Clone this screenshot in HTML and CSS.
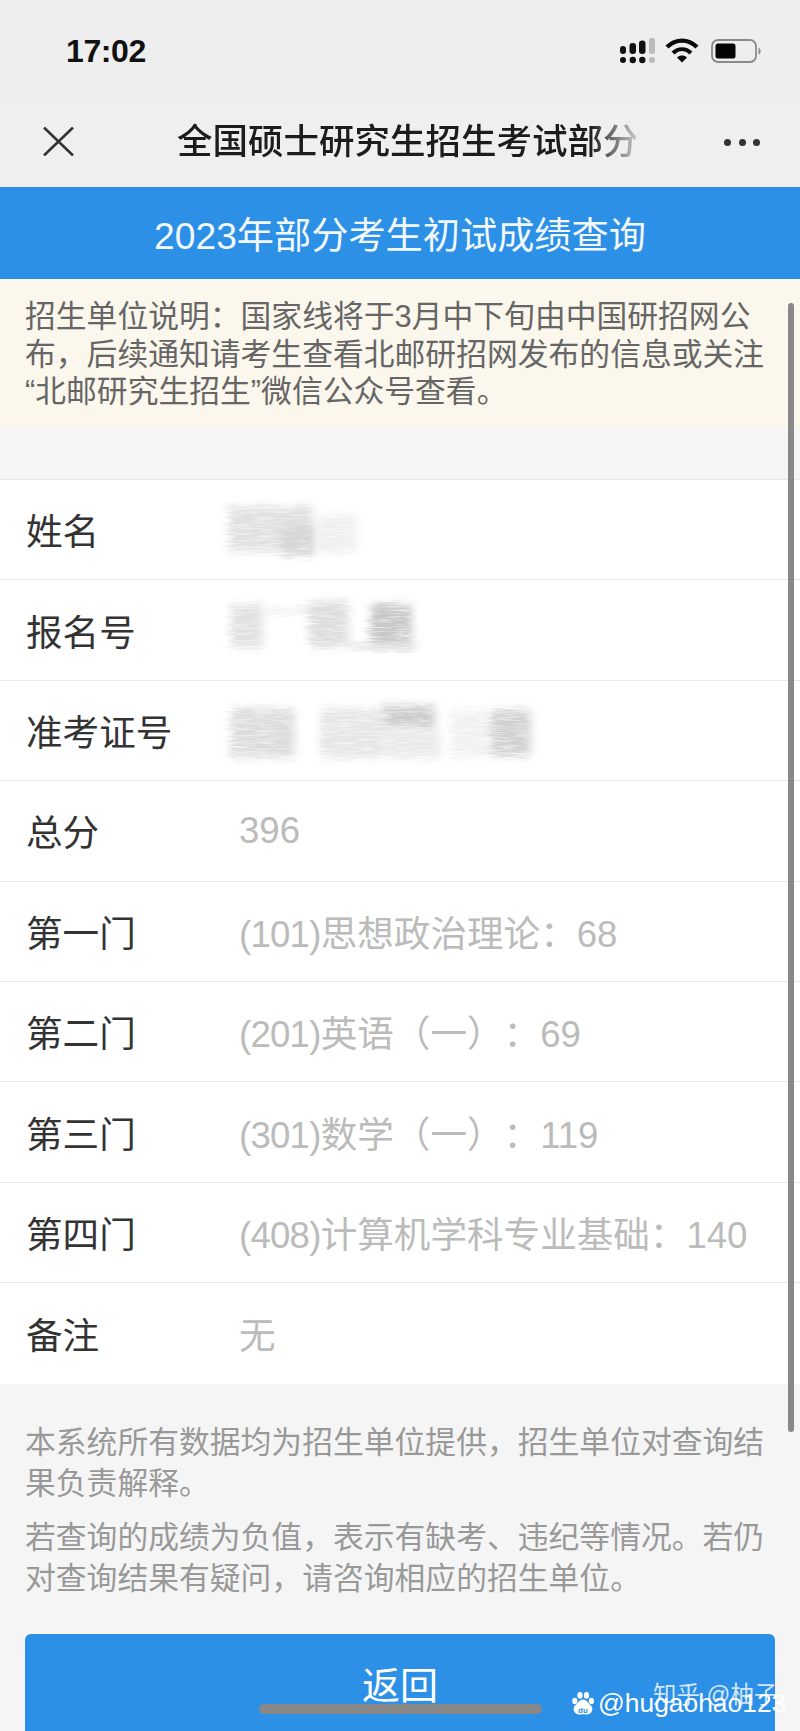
FILE: index.html
```html
<!DOCTYPE html>
<html lang="zh">
<head>
    <meta charset="UTF-8">
    <meta name="viewport" content="width=device-width, initial-scale=1.0">
    <title>2023年部分考生初试成绩查询</title>
    <link rel="stylesheet" href="styles.css">
</head>
<body>
    <div class="phone">
        <div class="status-bar">
            <span class="clock">17:02</span>
            <div class="status-icons">
                <svg class="signal" width="36" height="26" viewBox="0 0 36 26">
                    <rect x="0" y="8" width="6" height="8" rx="3" fill="#111"/>
                    <rect x="9.5" y="5" width="6.5" height="11" rx="3" fill="#111"/>
                    <rect x="19" y="2.5" width="6.5" height="13.5" rx="3" fill="#111"/>
                    <rect x="29" y="0" width="6" height="16" rx="2" fill="#bbb"/>
                    <circle cx="3" cy="22" r="3" fill="#111"/>
                    <circle cx="12.8" cy="22" r="3.2" fill="#111"/>
                    <circle cx="22.3" cy="22" r="3.2" fill="#111"/>
                    <circle cx="32" cy="22" r="3" fill="#bbb"/>
                </svg>
                <svg class="wifi" width="34" height="25" viewBox="0 0 34 25">
                    <path d="M2 9 C11 0.5 23 0.5 32 9" fill="none" stroke="#0a0a0a" stroke-width="4.4"/>
                    <path d="M8 15 C13.5 10 20.5 10 26 15" fill="none" stroke="#0a0a0a" stroke-width="4.2"/>
                    <path d="M12 19.4 C15 16.8 19 16.8 22 19.4 L17 24.6 Z" fill="#0a0a0a"/>
                </svg>
                <svg class="battery" width="51" height="24" viewBox="0 0 51 24">
                    <rect x="1" y="1" width="44" height="22" rx="6" fill="none" stroke="#8a8a8a" stroke-width="1.8"/>
                    <rect x="4.5" y="4.5" width="20" height="15" rx="2.5" fill="#050505"/>
                    <path d="M47.5 8.5 C50 9.5 50.5 14.5 47.5 15.5 Z" fill="#8a8a8a"/>
                </svg>
            </div>
        </div>

        <div class="nav-bar">
            <svg class="close-icon" width="31" height="29" viewBox="0 0 31 29">
                <path d="M1 0.5 L30 28.5 M30 0.5 L1 28.5" stroke="#333" stroke-width="2.6" fill="none"/>
            </svg>
            <div class="nav-title">全国硕士研究生招生考试部分</div>
            <div class="nav-more"><i></i><i></i><i></i></div>
        </div>

        <div class="page-title">2023年部分考生初试成绩查询</div>

        <div class="notice">招生单位说明：国家线将于3月中下旬由中国研招网公布，后续通知请考生查看北邮研招网发布的信息或关注“北邮研究生招生”微信公众号查看。</div>

        <div class="score-list">
            <div class="score-row">
                <div class="label">姓名</div>
                <svg class="scribble" width="160" height="70" viewBox="0 0 160 70">
                    <rect x="14" y="11" width="84" height="46" fill="#e0e0e0" filter="url(#soft)"/>
                    <rect x="68" y="30" width="32" height="30" fill="#d6d6d6" filter="url(#soft)"/>
                    <rect x="102" y="20" width="40" height="38" fill="#efefef" filter="url(#soft)"/>
                </svg>
            </div>
            <div class="score-row">
                <div class="label">报名号</div>
                <svg class="scribble" width="215" height="70" viewBox="0 0 215 70">
                    <rect x="16" y="9" width="32" height="44" fill="#e0e0e0" filter="url(#soft)"/>
                    <rect x="48" y="12" width="48" height="7" fill="#eeeeee" filter="url(#soft)"/>
                    <rect x="94" y="6" width="40" height="46" fill="#dddddd" filter="url(#soft)"/>
                    <rect x="155" y="9" width="42" height="42" fill="#c8c8c8" filter="url(#soft)"/>
                    <rect x="134" y="48" width="68" height="7" fill="#e0e0e0" filter="url(#soft)"/>
                </svg>
            </div>
            <div class="score-row">
                <div class="label">准考证号</div>
                <svg class="scribble" width="330" height="80" viewBox="0 0 330 80">
                    <rect x="16" y="18" width="64" height="50" fill="#dcdcdc" filter="url(#soft)"/>
                    <rect x="106" y="18" width="66" height="50" fill="#e6e6e6" filter="url(#soft)"/>
                    <rect x="170" y="15" width="50" height="24" fill="#cccccc" filter="url(#soft)"/>
                    <rect x="170" y="40" width="56" height="28" fill="#e9e9e9" filter="url(#soft)"/>
                    <rect x="236" y="20" width="38" height="48" fill="#f1f1f1" filter="url(#soft)"/>
                    <rect x="276" y="20" width="40" height="46" fill="#d0d0d0" filter="url(#soft)"/>
                </svg>
            </div>
            <div class="score-row">
                <div class="label">总分</div>
                <div class="value">396</div>
            </div>
            <div class="score-row">
                <div class="label">第一门</div>
                <div class="value"><span class="code">(101)</span>思想政治理论：68</div>
            </div>
            <div class="score-row">
                <div class="label">第二门</div>
                <div class="value"><span class="code">(201)</span>英语（一）：69</div>
            </div>
            <div class="score-row">
                <div class="label">第三门</div>
                <div class="value"><span class="code">(301)</span>数学（一）：119</div>
            </div>
            <div class="score-row">
                <div class="label">第四门</div>
                <div class="value"><span class="code">(408)</span>计算机学科专业基础：140</div>
            </div>
            <div class="score-row">
                <div class="label">备注</div>
                <div class="value">无</div>
            </div>
        </div>

        <div class="footnote">
            <p>本系统所有数据均为招生单位提供，招生单位对查询结果负责解释。</p>
            <p>若查询的成绩为负值，表示有缺考、违纪等情况。若仍对查询结果有疑问，请咨询相应的招生单位。</p>
        </div>

        <div class="back-btn">返回</div>

        <!-- page scrollbar, home bar and the two watermarks sit on top -->
        <div class="scrollbar"></div>
        <div class="home-bar"></div>
        <div class="watermark baidu">
            <svg width="22" height="23" viewBox="0 0 22 23">
                <ellipse cx="2.8" cy="9" rx="2.6" ry="3.2" fill="#fff"/>
                <ellipse cx="8" cy="3.4" rx="2.6" ry="3.3" fill="#fff"/>
                <ellipse cx="14.5" cy="3.4" rx="2.6" ry="3.3" fill="#fff"/>
                <ellipse cx="19.4" cy="9" rx="2.6" ry="3.2" fill="#fff"/>
                <path d="M11 7.5 C15 7.5 16 11.5 19.5 14 C22 18.5 18.5 23 14 22.5 C12 22 10 22 8 22.5 C3.5 23 0 18.5 2.5 14 C6 11.5 7 7.5 11 7.5 Z" fill="#fff"/>
                <text class="baidu-du" x="11" y="20.5" text-anchor="middle">du</text>
            </svg>
            <span>@hugaohao123</span>
        </div>
        <div class="watermark zhihu">知乎 @柚子</div>
    </div>

    <svg class="defs" width="0" height="0">
        <!-- smudgy pencil strokes over the personal details -->
        <filter id="soft" x="-30%" y="-30%" width="160%" height="160%">
            <feGaussianBlur in="SourceGraphic" stdDeviation="4" result="blurred"/>
            <feTurbulence type="fractalNoise" baseFrequency="0.05 0.6" numOctaves="2" seed="3" result="noise"/>
            <feDisplacementMap in="blurred" in2="noise" scale="10" xChannelSelector="R" yChannelSelector="G" result="moved"/>
            <feColorMatrix in="noise" type="matrix" values="0 0 0 0 0  0 0 0 0 0  0 0 0 0 0  1.6 0 0 0 0.1" result="streaks"/>
            <feComposite in="moved" in2="streaks" operator="in"/>
        </filter>
    </svg>
</body>
</html>
```

FILE: styles.css
```css
* {
    box-sizing: border-box;
}

html, body {
    margin: 0;
    padding: 0;
}

body {
    width: 800px;
    height: 1731px;
    overflow: hidden;
    background: #f5f5f5;
    font-family: "Liberation Sans", "Noto Sans CJK SC", sans-serif;
    text-spacing-trim: space-all;
}

.phone {
    position: relative;
    width: 800px;
    height: 1731px;
    overflow: hidden;
}

.defs {
    position: absolute;
}

/* status bar */
.status-bar {
    height: 100px;
    padding: 30px 38px 0 66px;
    display: flex;
    justify-content: space-between;
    align-items: flex-start;
    background: #eeeeee;
}

.clock {
    font-size: 32px;
    line-height: 42px;
    font-weight: bold;
    color: #111;
    letter-spacing: -0.4px;
}

.status-icons {
    display: flex;
    align-items: flex-start;
    padding-top: 8px;
}

.wifi {
    margin-left: 9.5px;
}

.battery {
    margin-left: 12px;
    margin-top: 1px;
}

/* nav */
.nav-bar {
    height: 87px;
    padding: 0 40px 0 43px;
    display: flex;
    align-items: center;
    background: #efefef;
}

.close-icon {
    flex: none;
    margin-top: -5px;
}

.nav-title {
    width: 462px;
    margin: -4px 0 0 103px;
    overflow: hidden;
    white-space: nowrap;
    font-size: 35.5px;
    line-height: 46px;
    font-weight: 500;
    color: #1c1c1c;
    -webkit-mask-image: linear-gradient(to right, #000 90%, rgba(0, 0, 0, 0.2) 100%);
    mask-image: linear-gradient(to right, #000 90%, rgba(0, 0, 0, 0.2) 100%);
}

.nav-more {
    display: flex;
    gap: 7.5px;
    margin: -3px 0 0 88px;
}

.nav-more i {
    width: 7px;
    height: 7px;
    border-radius: 50%;
    background: #333;
}

/* blue heading */
.page-title {
    height: 92px;
    display: flex;
    align-items: center;
    justify-content: center;
    background: #2b90e6;
    color: #f2f8fe;
    font-size: 37.2px;
}

.notice {
    height: 149px;
    padding: 19px 25px 0 25px;
    background: #fbf7ec;
    color: #666;
    font-size: 30.8px;
    line-height: 37.5px;
}

/* score table */
.score-list {
    margin-top: 51px;
    background: #fff;
    border-top: 1px solid #e8e8e8;
}

.score-row {
    height: 100.4px;
    padding-left: 26px;
    display: flex;
    align-items: center;
    border-bottom: 1px solid #e8e8e8;
}

.score-row:last-child {
    border-bottom: none;
}

.label {
    width: 213px;
    flex: none;
    font-size: 36.6px;
    color: #333;
}

.value {
    font-size: 36.6px;
    color: #bbb;
    white-space: nowrap;
}

.code {
    letter-spacing: -0.75px;
}

.scribble {
    flex: none;
    margin-left: -24px;
}

/* notes under the table */
.footnote {
    padding: 38px 25px 0 25px;
    color: #999;
    font-size: 30.8px;
    line-height: 41.5px;
}

.footnote p {
    margin: 0 0 12px 0;
}

.back-btn {
    position: absolute;
    left: 25px;
    top: 1634px;
    width: 750px;
    height: 110px;
    padding-top: 27px;
    text-align: center;
    background: #2b90e6;
    border-radius: 6px;
    color: #fff;
    font-size: 38px;
    line-height: 50px;
}

.scrollbar {
    position: absolute;
    left: 788px;
    top: 303px;
    width: 6px;
    height: 1129px;
    border-radius: 3px;
    background: #888;
}

.home-bar {
    position: absolute;
    left: 259px;
    top: 1704px;
    width: 283px;
    height: 10px;
    border-radius: 5px;
    background: #888;
}

.watermark {
    position: absolute;
    color: #fff;
    white-space: nowrap;
}

.baidu {
    left: 572px;
    top: 1686px;
    display: flex;
    align-items: center;
    gap: 4px;
    font-size: 26.4px;
    line-height: 34px;
}

.baidu-du {
    font-size: 8px;
    font-weight: bold;
    fill: #2b90e6;
}

.zhihu {
    left: 653px;
    top: 1680px;
    font-size: 23.5px;
    line-height: 30px;
    color: rgba(255, 255, 255, 0.8);
}
```
